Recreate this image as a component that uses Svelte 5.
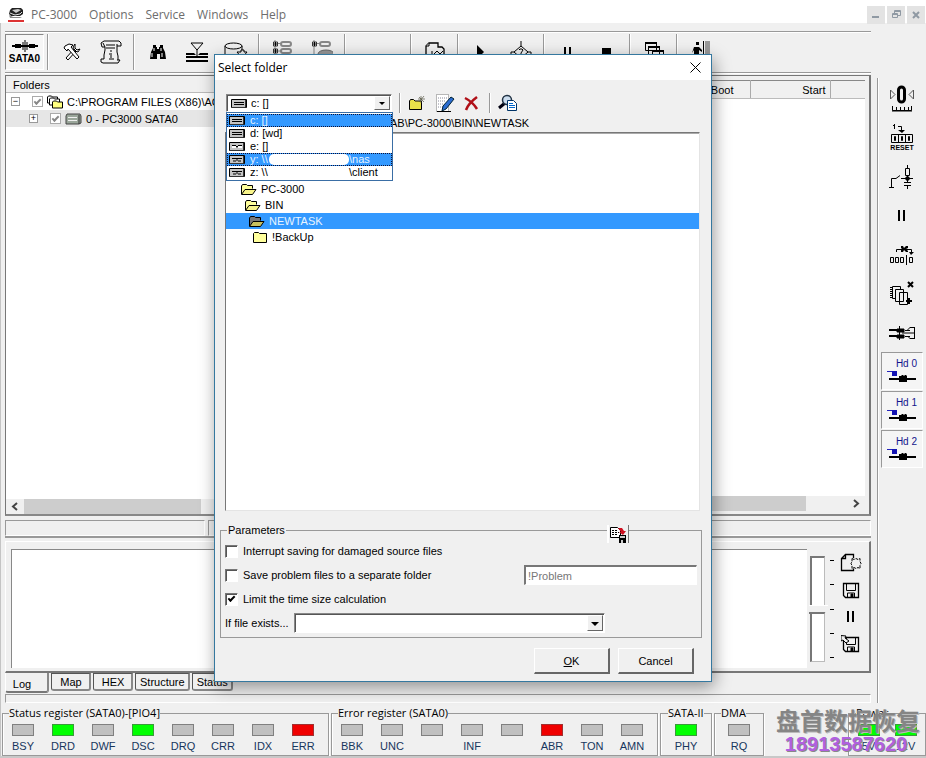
<script>
  const menus = ['PC-3000', 'Options', 'Service', 'Windows', 'Help'];
  const toolGroups = [
    ['tools', 'script'],
    ['find', 'filter', 'disk'],
    ['tree', 'treedisk'],
    ['gap'],
    ['export'],
    ['play', 'query'],
    ['pause', 'stop'],
    ['windows'],
    ['exit'],
  ];
  const sideTools = ['zero', 'reset', 'relay', 'pause', 'swap', 'chips', 'plug'];
  const drives = [
    { icon: 'drive', name: 'c: []', selected: true },
    { icon: 'drive', name: 'd: [wd]' },
    { icon: 'cd', name: 'e: []' },
    { icon: 'net', name: 'y: \\\\', share: '\\nas', selected: true, masked: true },
    { icon: 'net', name: 'z: \\\\', share: '\\client' },
  ];
  const folders = [
    { name: 'PC-3000', icon: 'open' },
    { name: 'BIN', icon: 'open' },
    { name: 'NEWTASK', icon: 'current', selected: true },
    { name: '!BackUp', icon: 'closed' },
  ];
  const tabs = ['Log', 'Map', 'HEX', 'Structure', 'Status'];
  const registers = [
    { title: 'Status register (SATA0)-[PIO4]', leds: [['BSY'], ['DRD', 'on'], ['DWF'], ['DSC', 'on'], ['DRQ'], ['CRR'], ['IDX'], ['ERR', 'err']] },
    { title: 'Error register (SATA0)', leds: [['BBK'], ['UNC'], [''], ['INF'], [''], ['ABR', 'err'], ['TON'], ['AMN']] },
    { title: 'SATA-II', kind: 'single', leds: [['PHY', 'on']] },
    { title: 'DMA', kind: 'single narrow', leds: [['RQ']] },
    { title: 'Power', kind: 'power', leds: [['5V', 'on'], ['12V', 'on']] },
  ];
  let volume = $state(50);
  let interrupt = $state(false);
  let separate = $state(false);
  let limit = $state(true);
</script>

{#snippet icon(name)}
  {#if name === 'app'}
    <svg width="16" height="15" viewBox="0 0 16 15"><path d="M4 1h9l2 2v4l-3 2H3L1 7l1-4z" fill="#222" /><path d="M4 3l6-1 3 1-5 3z" fill="#ccc" /><path d="M2 6l5 2 5-1 2-2" stroke="#ddd" fill="none" /><path d="M1 8l4 2h7l2 1H2z" fill="#888" /><path d="M0 13h16v2H0z" fill="#d33" /></svg>
  {:else if name === 'sata'}
    <svg width="28" height="12" viewBox="0 0 28 12"><path d="M1 6h26" stroke="#000" stroke-width="2" /><path d="M4 4h6v4H4zM18 4h6v4h-6z" /><path d="M12 2v8M16 2v8M14 0v12" stroke="#000" /></svg>
  {:else if name === 'tools'}
    <svg width="18" height="18" viewBox="0 0 18 18" fill="#fff" stroke="#000"><path d="M3 15l8-9 2 2-8 9zM12 1l-2 3 2 4 3 1 2-3-3 1-2-2z" /><path d="M2 3l4-2 4 1-2 2 8 10-2 2L5 6 4 8 1 5z" /></svg>
  {:else if name === 'script'}
    <svg width="22" height="24" viewBox="0 0 22 24" fill="none" stroke="#000"><path d="M4 1h15l2 2v3h-4M4 1L1 3l1 4h3v3l-1 5v4M17 4v8l1 4v4M4 19H1v3l2 1h15l2-3h-3M5 7L3 3M6 5h9M6 8h9" /><path d="M11 10v2M9 14h2v5M9 19h5" stroke="#777" stroke-width="2" /></svg>
  {:else if name === 'find'}
    <svg width="16" height="15" viewBox="0 0 16 15"><path d="M3 0h3v2h1v2h2V2h1V0h3v3l2 4 1 7h-6V9H7v5H0l1-7 2-4z" fill="#000" /><path d="M4 3v3M2 8v4M11 3v3M12 8v4" stroke="#fff" /></svg>
  {:else if name === 'filter'}
    <svg width="24" height="21" viewBox="0 0 24 21"><path d="M6 1h12l-6 7z" fill="none" stroke="#000" /><path d="M12 8v5" stroke="#000" /><path d="M1 11h8l3 3 3-3h8v2H1zM1 14h22v2H1zM1 18h22v2H1z" fill="#000" /></svg>
  {:else if name === 'disk'}
    <svg width="24" height="20" viewBox="0 0 24 20" fill="#f0f0f0" stroke="#000"><path d="M1 4v9l4 3h10l3-3V4" /><ellipse cx="9.500" cy="4" rx="8.500" ry="3" /><path d="M13 10h4V8h3v2h3l-5 6z" /></svg>
  {:else if name === 'tree' || name === 'treedisk'}
    <svg width="22" height="24" viewBox="0 0 22 24" fill="none" stroke="#888"><path d="M3 -2v22M3 3.500h7" /><path d="M1.500 2h4v4h-4z" fill="#fff" stroke="#333" /><path d="M2 4h3M3.500 2v4" stroke="#000" />{#if name === 'tree'}<path d="M3 11h7" /><path d="M1.500 9h4v4h-4z" fill="#fff" stroke="#333" /><path d="M2 11h3M3.500 9v4" stroke="#000" /><rect x="9" y="9" width="10" height="4" rx="2" stroke-width="2" />{:else}<ellipse cx="15" cy="14" rx="8" ry="4" fill="#999" stroke="#666" />{/if}<rect x="9" y="2" width="10" height="4" rx="2" stroke-width="2" /></svg>
  {:else if name === 'export'}
    <svg width="22" height="20" viewBox="0 0 22 20" fill="#f0f0f0" stroke="#000"><path d="M2 4l3-3h9v4h4l2 2v9H2z" stroke-width="1.300" /><path d="M5 1v3H2M8 9v5l5-5 3 3 3-3" /></svg>
  {:else if name === 'play'}
    <svg width="12" height="14" viewBox="0 0 12 14"><path d="M1 0v14l7-7z" /></svg>
  {:else if name === 'query'}
    <svg width="22" height="24" viewBox="0 0 22 24" fill="none" stroke="#000"><path d="M11 1v5l7 6-7 6-7-6 7-6M4 12H1v5M18 12h3v5M9 10l1-1h2l1 1-2 3v2" /></svg>
  {:else if name === 'pause'}
    <svg width="8" height="11" viewBox="0 0 8 11"><path d="M0 0h2v11H0zM5 0h2v11H5z" /></svg>
  {:else if name === 'stop'}
    <svg width="10" height="9" viewBox="0 0 10 9"><path d="M0 0h9v9H0z" /></svg>
  {:else if name === 'windows'}
    <svg width="20" height="22" viewBox="0 0 20 22" fill="#f0f0f0" stroke="#000"><path d="M1.500 1.500h11v8h-11zM4.500 5.500h11v8h-11zM8.500 9.500h11v8h-11z" /><path d="M1 2h12M4 6h12M8 10h12" stroke-width="2" /></svg>
  {:else if name === 'exit'}
    <svg width="20" height="22" viewBox="0 0 20 22"><path d="M5 1h3v3H5zM3 6h5l3 3v2L8 9v5l2 6H8l-3-5-3 5H0l3-7V9l-2 3z" /><path d="M12 0h1v22h-1z" /><path d="M14 0h5v22h-5z" fill="#999" /></svg>
  {:else if name === 'zero'}
    <svg width="26" height="28" viewBox="0 0 26 28" fill="none" stroke="#000"><path d="M1.500 5v9L6 9.500zM24.500 5v9L20 9.500z" stroke="#555" /><rect x="9.500" y="2" width="6" height="15" rx="3" stroke-width="3" /><path d="M3.500 21v4.500h19V21M7.500 22v3M11.500 22v3M15.500 22v3M19.500 22v3" /><path d="M3 26h20" /></svg>
  {:else if name === 'reset'}
    <svg width="24" height="20" viewBox="0 0 24 20" fill="none" stroke="#000"><path d="M4.500 0v5M3 1.500h1M8 2.500h3.500V7" /><path d="M8 6h7l-3 3z" fill="#000" stroke="none" /><path d="M1.500 10.500h21v8h-21zM8.500 10v9M15.500 10v9" /><path d="M4.500 12.500h1v4h-1zM11.500 12.500h1v4h-1zM18.500 12.500h1v4h-1z" /></svg>
  {:else if name === 'relay'}
    <svg width="26" height="24" viewBox="0 0 26 24" fill="none" stroke="#000"><path d="M0 22.500h5M2.500 22v-8.500H7l4-3M12 13.500h12M18.500 0v3M16.500 3.500h4v7h-4zM18.500 11v6M15 17.500h7M15 20.500h7M18.500 20v4" /><path d="M17 12h3v3h-3z" fill="#000" /></svg>
  {:else if name === 'swap'}
    <svg width="26" height="20" viewBox="0 0 26 20" fill="none" stroke="#000"><path d="M7.500 7V4.500h15V9" /><path d="M12 1h2l1 2 2-2h2v2l-2 1 2 2v1h-2l-2-2-1 2h-2V5l1-1-1-1zM20 7h5l-3 3z" fill="#000" stroke="none" /><path d="M1.500 12.500h3v5h-3zM6.500 12.500h3v5h-3zM11.500 12.500h3v5h-3zM17.500 10v10M20.500 12.500h3v5h-3z" /></svg>
  {:else if name === 'chips'}
    <svg width="24" height="25" viewBox="0 0 24 25" fill="#f0f0f0" stroke="#000"><path d="M2.500 5.500h8v12h-8z" /><path d="M0 6.500h2M0 8.500h2M0 10.500h2M0 12.500h2M0 14.500h2M0 16.500h2" /><path d="M5.500 8.500h8v12h-8zM9.500 11.500h8v12h-8z" /><path d="M18 1l5 5M23 1l-5 5" stroke-width="2" /><path d="M16 20h6M19 17v6" stroke-width="2" /></svg>
  {:else if name === 'plug'}
    <svg width="28" height="14" viewBox="0 0 28 14" fill="none" stroke="#000"><path d="M1 4h8M1 10h8" stroke-width="2" /><path d="M9 3h7v3H9zM9 9h7v3H9z" fill="#000" /><path d="M11.500 0v14M14 7h13M17 4.500h5M17 10.500h5" /><path d="M26.500 1v12M22 1.500h4M22 12.500h4M22.500 1l-3 3M22.500 13l-3-3" /></svg>
  {:else if name === 'hd'}
    <svg width="30" height="14" viewBox="0 0 30 14"><path d="M0 1.500h6" stroke="#22b" /><path d="M5 1h5v5H5z" fill="#1414b4" /><path d="M2 9h27" stroke="#000" stroke-width="2" /><path d="M12 6h2l1-1h1l1 1 1-1h1l1 1v6h-8z" /></svg>
  {:else if name === 'drive' || name === 'cd' || name === 'net'}
    <svg width="16" height="10" viewBox="0 0 16 10"><path d="M.5.5h15v8H.5z" fill="#c4c4c4" stroke="#000" /><path d="M14.500 1v7.500H1" stroke="#333" fill="none" />{#if name === 'drive'}<path d="M3 3.500h10M3 5.500h10" stroke="#000" />{:else if name === 'cd'}<path d="M3 3h10v3H3z" fill="#fff" /><path d="M3 3.500h4l1 2 1-2h4" stroke="#000" fill="none" />{:else}<path d="M3 3.500h10M8 3v3M4 6h3M9 6h3" stroke="#000" />{/if}</svg>
  {:else if name === 'open' || name === 'current'}
    <svg width="17" height="13" viewBox="0 0 17 13" stroke="#000"><path d="M1.500 11V3l1-1.500h4l1 1h5v3" fill={name === 'open' ? '#ffff9c' : '#777'} /><path d="M1.500 11.500L5 6.500h11l-3.500 5z" fill={name === 'open' ? '#f8f48a' : '#c8c060'} /></svg>
  {:else if name === 'closed'}
    <svg width="16" height="13" viewBox="0 0 16 13"><path d="M1.500 11.500v-9l1-1h4l1 1h7v9z" fill="#ffff9c" stroke="#000" /></svg>
  {:else if name === 'folders'}
    <svg width="16" height="14" viewBox="0 0 16 14" fill="#fff" stroke="#000"><path d="M.5 8V2l1-1h3l1 1h5v6z" /><path d="M2.500 10V4l1-1h3l1 1h5v6z" /><path d="M5.500 13V7l1-1h3l1 1h5v6z" fill="#ffff80" /></svg>
  {:else if name === 'hdd'}
    <svg width="17" height="12" viewBox="0 0 17 12"><path d="M2 1h13l1 2v7l-2 1H1V3z" fill="#9aa69a" stroke="#444" /><path d="M3 4.500h9M3 7.500h9" stroke="#eee" /><path d="M14 2v9" stroke="#333" /></svg>
  {:else if name === 'newfolder'}
    <svg width="17" height="16" viewBox="0 0 17 16"><path d="M.5 14.500V6l1-1.500h3L6 6h6.500v8.500z" fill="#e8e04a" stroke="#000" /><path d="M12 1v7M9 4h7M10 2l5 5M15 1l-5 6" stroke="#554" stroke-width=".7" /></svg>
  {:else if name === 'edit'}
    <svg width="20" height="20" viewBox="0 0 20 20"><path d="M1.500 1.500h12v17h-12z" fill="#fff" stroke="#777" stroke-dasharray="1 1" /><path d="M3 5h9M3 8h8M3 11h6M3 14h5" stroke="#889" stroke-dasharray="1 1" /><path d="M16 4l3 2-8 10-4 2 1-5z" fill="#2a6bd0" stroke="#023" /><path d="M2 18.500h14" stroke="#000" /></svg>
  {:else if name === 'delete'}
    <svg width="15" height="15" viewBox="0 0 15 15"><path d="M1 2c4 2 9 6 12 11M13 1C9 4 4 8 2 14" stroke="#b01018" stroke-width="2.500" fill="none" /></svg>
  {:else if name === 'search'}
    <svg width="20" height="18" viewBox="0 0 20 18"><path d="M1 14l6-5" stroke="#001" stroke-width="3" /><circle cx="9" cy="6" r="4.500" fill="#cde" stroke="#234" stroke-width="1.500" /><path d="M9.500 6.500h6l3 3v7h-9z" fill="#fff" stroke="#036" /><path d="M11 9.500h4M11 11.500h6M11 13.500h6" stroke="#06c" /></svg>
  {:else if name === 'savepreset'}
    <svg width="17" height="17" viewBox="0 0 17 17"><path d="M.5 1.500h7l3 3v7H.5z" fill="#fff" stroke="#000" /><path d="M2 4.500h5M2 6.500h7M2 8.500h6" stroke="#000" stroke-dasharray="2 1" /><path d="M8 2h4l2 3h2l-3 4-4-3h2z" fill="#d01020" /><path d="M9 9h7v8H9z" /><path d="M10 10h5v2h-5zM11 14h2v3h-2z" fill="#ccc" /></svg>
  {:else if name === 'newlog'}
    <svg width="22" height="20" viewBox="0 0 22 20" fill="none" stroke="#000"><path d="M13.500 5V1.500h-8l-4 4v12h12v-2M5.500 1.500v4h-4" stroke-width="1.300" /><path d="M12 5.500l2 1 2-1 2 1 2-1v3l1 2-1 2v3l-2-1-2 1-2-1-2 1v-3l-1-2 1-2z" stroke-dasharray="3 1" /></svg>
  {:else if name === 'save' || name === 'saveas'}
    <svg width="20" height="20" viewBox="0 0 20 20" fill="none" stroke="#000"><path d="M2.500 3.500h15v14H4.500l-2-2z" stroke-width="1.300" /><path d="M5.500 4v6.500h9V4M6.500 17v-4h7v4" /><path d="M10 14h2v3h-2z" fill="#000" />{#if name === 'saveas'}<path d="M0 1.500l5 .5-1 2 4 3-3 2-3-3-2 1z" fill="#f0f0f0" />{/if}</svg>
  {/if}
{/snippet}

<div class="app">
  <header class="menubar">
    {@render icon('app')}
    <nav>
      {#each menus as m}<button type="button">{m}</button>{/each}
    </nav>
    <div class="winctl">
      <button type="button" aria-label="Minimize"><svg width="8" height="8"><path d="M0 6h7" stroke="#8f99a3" stroke-width="2" /></svg></button>
      <button type="button" aria-label="Restore"><svg width="9" height="9" fill="none" stroke="#8f99a3"><path d="M2.500 3V.5h6v5H6M.5 3.500h5v4h-5zM3 1.500h5M1 4.500h5" /></svg></button>
      <button type="button" aria-label="Close window"><svg width="8" height="8"><path d="M1 1l6 6M7 1L1 7" stroke="#8f99a3" stroke-width="2" /></svg></button>
    </div>
  </header>

  <div class="body">
    <main>
      <div class="toolbar">
        <button type="button" class="sata">{@render icon('sata')}<b>SATA0</b></button>
        {#each toolGroups as group}
          <i class="sep"></i>
          {#each group as t}
            {#if t === 'gap'}<span class="gap"></span>{:else}<button type="button" aria-label={t}>{@render icon(t)}</button>{/if}
          {/each}
        {/each}
      </div>

      <div class="panels">
        <section class="tree">
          <h2>Folders</h2>
          <ul>
            <li><span class="expander">−</span><label><input type="checkbox" checked disabled />{@render icon('folders')}<span>C:\PROGRAM FILES (X86)\AC</span></label></li>
            <li class="child"><span class="expander">+</span><label><input type="checkbox" checked disabled />{@render icon('hdd')}<span>0 - PC3000 SATA0</span></label></li>
          </ul>
          <div class="scroll"><svg width="7" height="9"><path d="M6 1L2 4.500l4 3.500" /></svg><i></i></div>
        </section>
        <section class="files">
          <table><thead><tr><th class="boot">Boot</th><th class="start">Start</th><th class="rest"></th></tr></thead></table>
          <div class="scroll end"><i></i><svg width="7" height="9"><path d="M1 1l4 3.500L1 8" /></svg></div>
        </section>
      </div>

      <div class="statusbar"><span></span><span></span></div>

      <section class="log">
        <textarea aria-label="Log"></textarea>
        <input class="level" type="range" min="0" max="100" bind:value={volume} aria-label="Level" />
        <div class="ticks"><i></i><i></i><i></i><i></i><i></i></div>
        <div class="logtools">
          {#each ['newlog', 'save', 'pause', 'saveas'] as t}<button type="button" aria-label={t}>{@render icon(t)}</button>{/each}
        </div>
      </section>
      <div class="tabs">
        {#each tabs as t, i}<button type="button" class:active={i === 0}>{t}</button>{/each}
      </div>
      <div class="frame"></div>
    </main>

    <aside>
      {#each sideTools as t}
        <button type="button" class="side" aria-label={t}>{@render icon(t)}{#if t === 'reset'}<b>RESET</b>{/if}</button>
      {/each}
      {#each [0, 1, 2] as n}
        <button type="button" class="hd"><span>Hd {n}</span>{@render icon('hd')}</button>
      {/each}
    </aside>
  </div>

  <footer>
    {#each registers as r}
      <fieldset class={r.kind}>
        <legend>{r.title}</legend>
        <div class="leds">
          {#each r.leds as [name, state]}
            <span class="led {state ?? ''}"><i></i>{name}</span>
          {/each}
        </div>
      </fieldset>
    {/each}
    <div class="mark"><strong>盘首数据恢复</strong><em>18913587620</em></div>
  </footer>

  <div class="dialog" role="dialog" aria-labelledby="dlg-title">
    <div class="title">
      <h1 id="dlg-title">Select folder</h1>
      <button type="button" aria-label="Close"><svg width="11" height="11"><path d="M.5.5l10 10M10.500.5l-10 10" stroke="#000" /></svg></button>
    </div>
    <div class="content">
      <div class="drivebar">
        <div class="combo drivecombo">
          {@render icon('drive')}
          <select aria-label="Drive"><option>c: []</option></select>
          <ul class="droplist">
            {#each drives as d}
              <li class:selected={d.selected}>
                {@render icon(d.icon)}<span class="letter">{d.name}</span>
                {#if d.share}<span class="mask" class:masked={d.masked}></span><span>{d.share}</span>{/if}
              </li>
            {/each}
          </ul>
        </div>
        <i class="vsep"></i>
        <button type="button" aria-label="New folder">{@render icon('newfolder')}</button>
        <button type="button" aria-label="Rename">{@render icon('edit')}</button>
        <button type="button" aria-label="Delete">{@render icon('delete')}</button>
        <i class="vsep near"></i>
        <button type="button" aria-label="Search">{@render icon('search')}</button>
      </div>
      <div class="path">AB\PC-3000\BIN\NEWTASK</div>
      <ul class="folders">
        {#each folders as f, i}
          <li class:selected={f.selected} style:padding-left="{14 + i * 4}px">{@render icon(f.icon)}<span>{f.name}</span></li>
        {/each}
      </ul>
      <fieldset class="params">
        <legend>Parameters</legend>
        <button type="button" class="preset" aria-label="Save parameters">{@render icon('savepreset')}</button>
        <div class="row"><label><input type="checkbox" bind:checked={interrupt} />Interrupt saving for damaged source files</label></div>
        <div class="row"><label><input type="checkbox" bind:checked={separate} />Save problem files to a separate folder</label><input class="edit" type="text" value="!Problem" disabled aria-label="Problem folder" /></div>
        <div class="row"><label><input type="checkbox" bind:checked={limit} />Limit the time size calculation</label></div>
        <div class="row"><label for="exists">If file exists...</label><div class="combo existcombo"><select id="exists"><option></option></select></div></div>
      </fieldset>
      <div class="actions">
        <button type="button"><span><u>O</u>K</span></button>
        <button type="button">Cancel</button>
      </div>
    </div>
  </div>
</div>

<style>
  :global(body) { margin: 0; background: #f0f0f0; }
  .app, .app :global(*) { box-sizing: border-box; }
  .app { position: relative; min-height: 100vh; display: flex; flex-direction: column; background: #f0f0f0; color: #000; font: 11px/14px "Liberation Sans", Arial, sans-serif; border-bottom: 2px solid #c8c8c8; overflow: hidden; }
  button, select, input, textarea { font: inherit; color: inherit; margin: 0; }
  button { background: none; border: 0; padding: 0; display: flex; align-items: center; justify-content: center; }
  ul { list-style: none; margin: 0; padding: 0; }
  h1, h2 { margin: 0; font-weight: normal; font-size: inherit; }
  svg { flex: none; display: block; }

  .menubar { display: flex; align-items: center; height: 23px; padding-left: 8px; background: #fff; padding-top: 6px; }
  .menubar nav { display: flex; flex: 1; gap: 12px; padding-left: 7px; color: #6d6d6d; font: 12px/16px "Open Sans", "Noto Sans", sans-serif; }
  .winctl { display: flex; gap: 2px; padding-right: 1px; }
  .winctl button { width: 18px; height: 18px; background: #e3e3e3; }

  .body { flex: 1; display: flex; border-left: 1px solid #c4c4c4; }
  main { flex: 1; min-width: 0; display: flex; flex-direction: column; padding: 8px 6px 0 4px; }
  .toolbar { display: flex; align-items: stretch; height: 42px; border-top: 1px solid #999; border-bottom: 1px solid #999; box-shadow: inset 0 1px #fff, 0 1px #fff; padding: 2px 0; }
  .toolbar button { width: 39px; }
  .toolbar .sata { width: 39px; flex-direction: column; gap: 2px; border: 1px solid #888; border-right-color: #fff; border-bottom-color: #fff; background: #f6f6f6; font-size: 10px; line-height: 10px; }
  .sep { width: 8px; display: flex; justify-content: center; }
  .sep::before { content: ""; width: 1px; background: #999; border-right: 1px solid #fff; }
  .gap { width: 58px; }

  .panels { flex: 1; display: flex; margin-top: 2px; border: 1px solid #777; border-right: 2px solid #777; border-bottom: 2px solid #888; }
  .tree { flex: 0 0 30%; display: flex; flex-direction: column; background: #fff; border-right: 1px solid #888; }
  .tree h2 { background: #f0f0f0; line-height: 16px; padding: 1px 7px 0; height: 17px; border-bottom: 1px solid #bbb; }
  .tree ul { flex: 1; }
  .tree li { display: flex; align-items: center; height: 17px; padding-left: 5px; white-space: nowrap; overflow: hidden; }
  .tree .child { background: #e6e6e6; padding-left: 23px; }
  .tree label { display: flex; align-items: center; gap: 4px; }
  .expander { width: 9px; height: 9px; border: 1px solid #999; background: #fff; font-size: 9px; line-height: 7px; text-align: center; margin-right: 12px; }
  input[type="checkbox"] { appearance: none; flex: none; width: 13px; height: 13px; background: #fff; border: 1px solid #777; border-right-color: #fff; border-bottom-color: #fff; box-shadow: inset 1px 1px #555; display: grid; place-items: center; }
  input[type="checkbox"]:checked::before { content: ""; width: 5px; height: 2px; border: solid #000; border-width: 0 0 2px 2px; transform: rotate(-45deg); margin-bottom: 2px; }
  .tree input[type="checkbox"] { width: 11px; height: 11px; border-color: #aaa; box-shadow: none; }
  .tree input[type="checkbox"]:checked::before { border-color: #888; }
  .scroll { display: flex; align-items: center; height: 15px; background: #f0f0f0; padding-left: 5px; gap: 6px; }
  .scroll svg { fill: none; stroke: #444; stroke-width: 2; }
  .scroll i { align-self: stretch; width: 177px; background: #cdcdcd; }
  .files { flex: 1; display: flex; flex-direction: column; justify-content: space-between; background: #fff; border-top: 4px solid #f0f0f0; border-right: 4px solid #f0f0f0; border-bottom: 3px solid #f0f0f0; }
  .files table { width: 100%; border-collapse: collapse; border-top: 1px solid #888; background: #f0f0f0; }
  .files th { height: 18px; padding: 0 4px; font-weight: normal; text-align: right; border-right: 1px solid #aaa; border-bottom: 1px solid #bbb; }
  .files .boot { padding-right: 16px; }
  .files .start { width: 80px; }
  .files .rest { width: 35px; border-right: 0; }
  .scroll.end { padding: 0 5px 0 0; justify-content: space-between; }
  .scroll.end i { width: 91%; }

  .statusbar { display: flex; gap: 3px; height: 22px; padding-top: 4px; border-bottom: 2px solid #999; }
  .statusbar span { flex: 1; border: 1px solid #aaa; border-color: #999 #fff #fff #999; }
  .statusbar span:first-child { flex: 0 0 200px; }

  .log { display: flex; height: 132px; margin-top: 3px; padding: 7px 7px 3px 5px; border: 1px solid #fff; border-right: 2px solid #777; border-bottom: 2px solid #777; }
  .log textarea { flex: 1; resize: none; background: #fff; border: 1px solid #888; border-width: 1px 0 0 1px; outline: 0; }
  .level { appearance: none; writing-mode: vertical-lr; width: 21px; height: 106px; margin: 7px 0 0 2px; background: none; }
  .level::-webkit-slider-runnable-track { width: 15px; height: 106px; background: #fff; border: 1px solid #bbb; border-left: 2px solid #777; border-top: 2px solid #777; margin-right: 4px; }
  .level::-webkit-slider-thumb { appearance: none; width: 19px; height: 9px; background: linear-gradient(#fff 0 1px, #f0f0f0 1px 7px, #777 7px); border: 0; clip-path: polygon(0 0, 100% 0, 100% 30%, 80% 100%, 0 100%); margin-left: -3px; }
  .ticks { display: flex; flex-direction: column; justify-content: space-between; height: 98px; margin: 11px 6px 0 0; }
  .ticks i { width: 4px; height: 1px; background: #000; }
  .logtools { display: flex; flex-direction: column; }
  .logtools button { width: 22px; height: 27px; }

  .tabs { display: flex; gap: 2px; height: 21px; align-items: flex-start; }
  .tabs button { min-width: 40px; height: 18px; padding: 0 3px 0 4px; border: 1px solid #555; border-radius: 0 0 3px 3px; border-right: 2px solid #888; border-bottom: 2px solid #888; }
  .tabs .active { width: 44px; height: 20px; border-color: #888 #888 #777 #fff; border-top: 0; padding: 4px 9px 0 0; }
  .frame { height: 9px; border: 1px solid #fff; border-top-color: #999; border-left-color: #999; }

  aside { width: 49px; flex: none; border-left: 1px solid #999; margin-top: 55px; padding: 1px 0 0 3px; box-shadow: inset 1px 0 #fff; display: flex; flex-direction: column; }
  .side { width: 42px; height: 39px; flex-direction: column; }
  .side b { font-size: 7px; line-height: 8px; }
  .hd { width: 42px; height: 38px; margin-bottom: 1px; flex-direction: column; border: 1px solid #999; border-right-color: #fff; border-bottom-color: #fff; background: #f5f5f5; color: #14148c; font-size: 10px; line-height: 12px; }
  .hd span { align-self: flex-end; padding-right: 5px; }

  footer { position: relative; display: flex; gap: 2px; padding: 3px 0 0 1px; border-left: 1px solid #c4c4c4; }
  footer fieldset { margin: 0; padding: 3px 5px 1px 0; min-width: 0; border: 1px solid #999; box-shadow: inset 1px 0 #fff, 1px 1px #fff; }
  footer legend { font: 11px/14px "Open Sans", "Noto Sans", sans-serif; padding: 0; margin-left: 6px; white-space: nowrap; }
  footer .single { padding: 3px 3px 1px; }
  footer .single legend { margin-left: 4px; }
  footer .narrow { padding: 3px 2px 1px; }
  footer .power { margin-left: auto; padding: 3px 1px 1px; }
  .leds { display: flex; }
  .led { width: 40px; height: 31px; display: flex; flex-direction: column; align-items: center; gap: 3px; color: #17365d; }
  .single .led { width: 44px; }
  .power .led { width: 37px; }
  .led i { width: 22px; height: 12px; margin-top: 1px; background: #c0c0c0; border: 1px solid #808080; }
  .led.on i { background: #0f0; border-color: #3a9a3a; }
  .led.err i { background: #f00000; border-color: #a03030; }
  .mark { position: absolute; right: 6px; bottom: 1px; display: flex; flex-direction: column; align-items: center; white-space: nowrap; }
  .mark strong { font: bold 24px/26px "Noto Sans CJK SC", sans-serif; color: #858585; text-shadow: 1px 1px #bbb; }
  .mark em { font: bold 18px/22px "Liberation Sans", sans-serif; color: #b060e0; padding-right: 4px; text-shadow: 1px 1px #888; }
  .mark em { font-style: normal; font-size: 20px; }

  .dialog { position: absolute; top: 54px; left: 0; right: 0; margin: 0 auto; width: 498px; background: #f0f0f0; border: 1px solid #35789f; box-shadow: 2px 5px 16px rgba(0, 0, 0, 0.4); }
  .title { display: flex; justify-content: space-between; align-items: center; height: 25px; padding: 0 10px 0 3px; background: #fff; }
  .title h1 { font: 12px/16px "Open Sans", "Noto Sans", sans-serif; }
  .content { padding: 14px 9px 7px 5px; }
  .drivebar { display: flex; align-items: center; height: 18px; padding-left: 6px; }
  .drivebar button { width: 27px; height: 20px; }
  .vsep { width: 2px; height: 20px; margin: 0 3px 0 7px; background: #999; border-right: 1px solid #fff; }
  .vsep.near { margin-left: 4px; }
  .combo { position: relative; border: 1px solid #fff; border-top-color: #888; border-left-color: #888; background: #fff; box-shadow: inset 1px 1px #555; }
  .combo select { display: block; appearance: none; width: 100%; height: 100%; border: 0; background: none; outline: 0; padding: 0 18px 0 24px; line-height: 14px; }
  .combo > :global(svg) { position: absolute; left: 4px; top: 4px; }
  .combo::before { content: ""; position: absolute; right: 1px; top: 1px; bottom: 1px; width: 14px; background: #f0f0f0; border: 1px solid #fff; border-right-color: #666; border-bottom-color: #666; pointer-events: none; }
  .combo::after { content: ""; position: absolute; right: 5px; top: 50%; margin-top: -1px; border: 4px solid transparent; border-top-color: #000; border-bottom: 0; pointer-events: none; }
  .drivecombo { width: 166px; height: 18px; }
  .drivecombo::after { border-width: 3px; border-bottom: 0; right: 6px; }
  .droplist { position: absolute; z-index: 2; left: -1px; top: 17px; width: 167px; padding: 1px 0; background: #fff; border: 1px solid #3a6ea5; }
  .droplist li { display: flex; align-items: center; height: 13px; padding-left: 2px; line-height: 13px; }
  .droplist .letter { width: 24px; padding-left: 5px; white-space: nowrap; }
  .droplist .mask { width: 80px; height: 11px; }
  .droplist .masked { background: #fff; border-radius: 5px; }
  .selected { background: #3399ff; color: #e8f4ff; }
  .droplist .selected { outline: 1px dotted #113; outline-offset: -1px; }
  .path { padding: 4px 0 0 170px; height: 20px; }
  .folders { height: 379px; margin: 0 2px 0 5px; padding-top: 48px; background: #fff; border: 1px solid #777; border-right-color: #e4e4e4; border-bottom-color: #e4e4e4; box-shadow: inset 0 1px #aaa; }
  .folders li { display: flex; align-items: center; gap: 4px; height: 16px; }

  .params { position: relative; margin: 12px 0 0; padding: 2px 4px; border: 1px solid #999; min-width: 0; }
  .params legend { padding: 0 1px; margin-left: 2px; }
  .preset { position: absolute; right: 72px; top: -12px; width: 22px; height: 18px; background: #f0f0f0; border-right: 1px solid #777; border-left: 2px solid #fff; }
  .row { display: flex; align-items: center; justify-content: space-between; height: 24px; }
  .row label { display: flex; align-items: center; gap: 5px; white-space: nowrap; }
  .row:last-child { justify-content: flex-start; gap: 5px; }
  .edit { width: 173px; height: 20px; padding: 0 2px; background: #fff; color: #777; border: 1px solid #fff; border-top: 2px solid #777; border-left: 2px solid #777; outline: 0; }
  .existcombo { width: 311px; height: 20px; }
  .existcombo select { padding-left: 4px; }
  .actions { display: flex; justify-content: flex-end; gap: 8px; padding: 10px 8px 0 0; }
  .actions button { width: 76px; height: 26px; border: 1px solid #fff; border-right: 2px solid #666; border-bottom: 2px solid #666; }
</style>
